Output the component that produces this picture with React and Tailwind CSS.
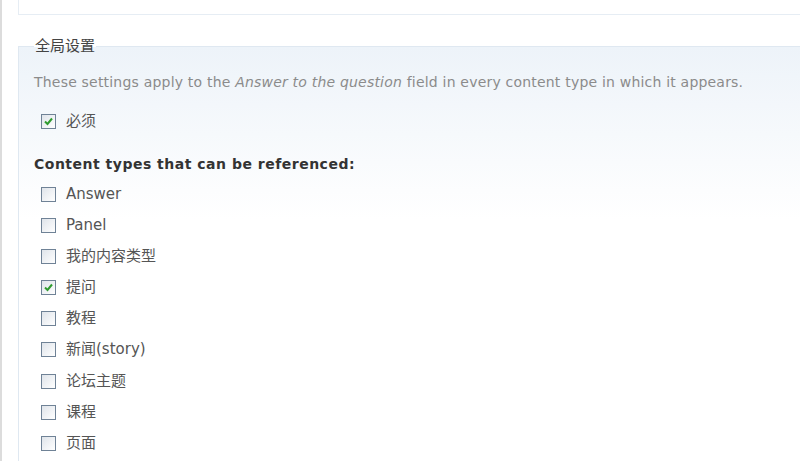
import React from "react";

const items = [
  { label: "Answer", checked: false },
  { label: "Panel", checked: false },
  { label: "我的内容类型", checked: false },
  { label: "提问", checked: true },
  { label: "教程", checked: false },
  { label: "新闻(story)", checked: false },
  { label: "论坛主题", checked: false },
  { label: "课程", checked: false },
  { label: "页面", checked: false },
];

const Checkbox = ({ checked }) => (
  <span className="w-[15px] h-[15px] border border-[#6f8296] bg-gradient-to-br from-[#dfe4ea] to-white flex items-center justify-center shrink-0">
    {checked && (
      <svg width="11" height="11" viewBox="0 0 11 11">
        <path d="M2 5.5 L4.5 8 L9 2.5" fill="none" stroke="#2f9b2f" strokeWidth="2" />
      </svg>
    )}
  </span>
);

export default function App() {
  return (
    <div
      className="w-[800px] h-[461px] bg-white overflow-hidden flex"
      style={{ fontFamily: '"DejaVu Sans", "Noto Sans CJK SC", sans-serif' }}
    >
      <div className="w-[4px] border-l-2 border-[#dcdcdc] shrink-0" />
      <div className="flex-1 pl-[14px]">
        {/* box above */}
        <div className="h-[15px] border-l border-b border-[#e6edf4]" />

        {/* fieldset */}
        <fieldset className="mt-[24px] border-l border-t border-[#dfe8f1] bg-gradient-to-b from-[#edf3f9] via-white via-40% to-white min-h-[440px] pl-[15px] pr-4">
          <legend className="px-[1px] text-[15px] text-[#444] leading-none -mt-[1px]">
            全局设置
          </legend>
          <p className="mt-[21px] text-[14px] tracking-[0.2px] text-[#8b8b8b] leading-none whitespace-nowrap">
            These settings apply to the <em>Answer to the question</em> field in every content type in which it appears.
          </p>
          <div className="mt-[25px] flex items-center gap-[10px] pl-[7px]">
            <Checkbox checked />
            <span className="text-[15px] text-[#555] leading-none">必须</span>
          </div>
          <h3 className="mt-[28px] text-[14px] tracking-[0.5px] font-bold text-[#333] leading-none">
            Content types that can be referenced:
          </h3>
          <div className="mt-[16px] flex flex-col gap-[16.1px] pl-[7px]">
            {items.map((item) => (
              <div key={item.label} className="flex items-center gap-[10px] h-[15px]">
                <Checkbox checked={item.checked} />
                <span className="text-[15px] text-[#555] leading-none">{item.label}</span>
              </div>
            ))}
          </div>
        </fieldset>
      </div>
    </div>
  );
}
